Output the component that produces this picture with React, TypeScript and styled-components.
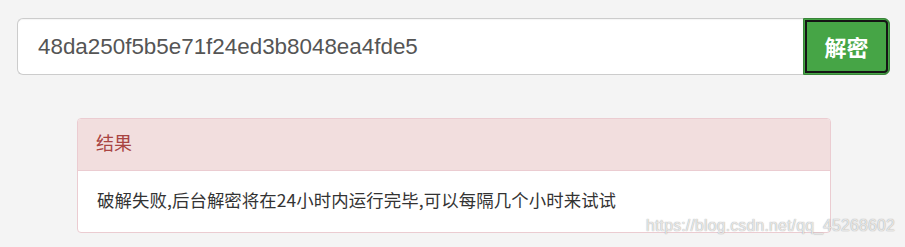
import React, { useState } from "react";
import styled, { createGlobalStyle } from "styled-components";

const GlobalStyle = createGlobalStyle`
  html, body {
    margin: 0;
    padding: 0;
    background: #f4f4f4;
    font-family: "Liberation Sans", Arial, "Noto Sans CJK SC", sans-serif;
  }
`;

const Page = styled.div`
  position: relative;
  height: 247px;
  padding: 18px 15px 0 17px;
  box-sizing: border-box;
  overflow: hidden;
`;

const InputGroup = styled.div`
  display: flex;
  height: 57px;
`;

const HashInput = styled.input`
  flex: 1;
  min-width: 0;
  height: 100%;
  box-sizing: border-box;
  padding: 0 20px;
  border: 1px solid #cccccc;
  border-right: none;
  border-radius: 6px 0 0 6px;
  background: #ffffff;
  color: #555555;
  font-family: "Liberation Sans", Arial, sans-serif;
  font-size: 22.4px;
  outline: none;
  box-shadow: inset 0 1px 1px rgba(0, 0, 0, 0.04);
`;

const DecryptBtn = styled.button`
  width: 87px;
  height: 100%;
  box-sizing: border-box;
  border: 1px solid #398439;
  border-radius: 0 6px 6px 0;
  background: #46a546;
  color: #ffffff;
  font-family: "Noto Sans CJK SC", sans-serif;
  font-size: 22px;
  font-weight: 700;
  cursor: pointer;
  box-shadow: inset 0 0 0 1px #46a546, inset 0 0 0 3px #151515;
  padding: 0 0 2px;
`;

const Panel = styled.div`
  margin: 43px 0 0 60px;
  width: 754px;
  box-sizing: border-box;
  border: 1px solid #ebccd1;
  border-radius: 4px;
  background: #ffffff;
  overflow: hidden;
`;

const PanelHeading = styled.div`
  height: 52px;
  display: flex;
  align-items: center;
  padding: 0 18px 5px;
  box-sizing: border-box;
  background: #f2dede;
  border-bottom: 1px solid #ebccd1;
  color: #a94442;
  font-family: "Noto Sans CJK SC", sans-serif;
  font-size: 18px;
`;

const PanelBody = styled.div`
  height: 61px;
  display: flex;
  align-items: center;
  padding: 0 19px 5px;
  box-sizing: border-box;
  color: #333333;
  font-family: "Noto Sans CJK SC", sans-serif;
  font-size: 17.4px;
  letter-spacing: 0.1px;
`;

const Watermark = styled.span`
  position: absolute;
  right: 10px;
  bottom: 12px;
  color: rgba(255, 255, 255, 0.7);
  font-family: "Liberation Sans", Arial, sans-serif;
  font-size: 15.8px;
  letter-spacing: 0.2px;
  text-shadow: 0 0 1px rgba(160, 160, 160, 0.85), 0 0 1px rgba(160, 160, 160, 0.6);
  pointer-events: none;
`;

const App = () => {
  const [hash, setHash] = useState("48da250f5b5e71f24ed3b8048ea4fde5");

  return (
    <>
      <GlobalStyle />
      <Page>
        <InputGroup>
          <HashInput value={hash} onChange={(e) => setHash(e.target.value)} />
          <DecryptBtn>解密</DecryptBtn>
        </InputGroup>
        <Panel>
          <PanelHeading>结果</PanelHeading>
          <PanelBody>破解失败,后台解密将在24小时内运行完毕,可以每隔几个小时来试试</PanelBody>
        </Panel>
        <Watermark>https://blog.csdn.net/qq_45268602</Watermark>
      </Page>
    </>
  );
};

export default App;
